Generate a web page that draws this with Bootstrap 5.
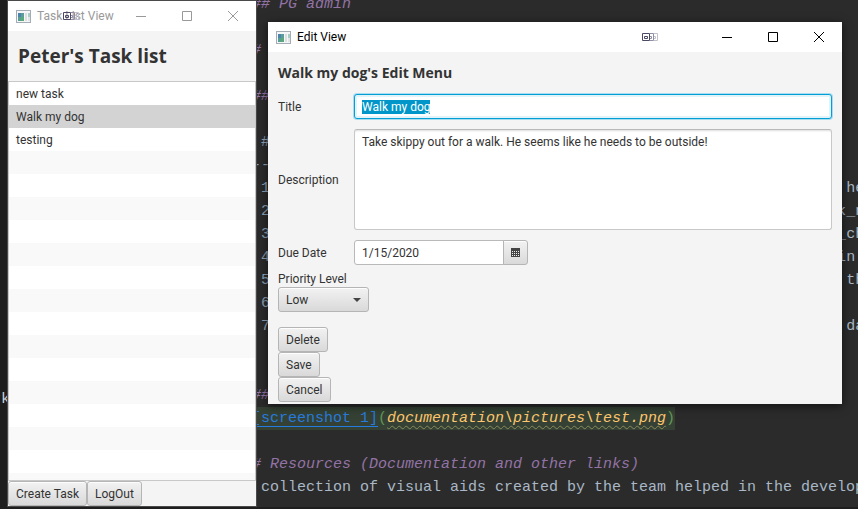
<!DOCTYPE html>
<html lang="en">
<head>
<meta charset="utf-8">
<meta name="viewport" content="width=device-width, initial-scale=1">
<title>Task List</title>
<link href="https://cdn.jsdelivr.net/npm/bootstrap@5.3.0/dist/css/bootstrap.min.css" rel="stylesheet">
<style>
  body { background: #1e1e1e; font-family: Roboto, "Open Sans", sans-serif; font-size: 12px; line-height: 16px; color: #333; }
  .desktop { height: 100vh; }
  .gutter { width: 252px; background: #1e1e1e; }
  .gutter-text { margin-top: 388px; margin-left: -8px; color: #d0d4d8; font: 15px/23px "Liberation Mono", monospace; }
  .editor { background: #2b2b2b; min-width: 0; }
  .code { margin: -7px 0 0; font: 15px/23px "Liberation Mono", monospace; color: #a9b7c6; overflow: hidden; }
  .statusbar { height: 2px; background: #1e1e1e; }
  .head { color: #9373a5; font-style: italic; }
  .num { color: #8fa3b8; }
  .line-hl { background: #344134; display: inline-block; height: 23px; color: #629755; }
  .line-hl a { color: #287bde; text-decoration: underline; text-underline-offset: 4px; }
  .line-hl em { color: #ffc66d; text-decoration: underline wavy #8a8a5a 1px; text-underline-offset: 3px; }

  .win { background: #f4f4f4; }
  .win-tasks { left: 8px; top: 1px; bottom: 3px; width: 248px; outline: 1px solid #4a4a4a; }
  .win-edit { left: 268px; right: 16px; top: 22px; box-shadow: 0 2px 9px rgba(0,0,0,.6); }
  .titlebar { height: 30px; background: #fff; color: #000; padding-left: 8px; }
  .titlebar.inactive { color: #999; }
  .titlebar .cap { width: 46px; height: 30px; color: inherit; }
  .titlebar .app-title { margin-left: 6px; }
  .overlap { left: 55px; top: 11px; }
  .grip { margin-right: 46px; }

  .tasks-title { font-family: "Open Sans", sans-serif; font-size: 19px; line-height: 26px; padding: 12px 10px; }
  .tasks { border: 1px solid #c8c8c8; background: repeating-linear-gradient(#fff 0 23px, #f9f9f9 23px 46px); }
  .task { height: 23px; padding: 0 7px; line-height: 24px; }
  .task.selected { background: #d3d3d3; }

  .fx-btn { height: 25px; padding: 0 7px; border: 1px solid #b5b5b5; border-radius: 3px; background: linear-gradient(#f2f2f2, #d9d9d9); color: #333; box-shadow: inset 0 1px #fdfdfd; font-size: 12px; line-height: 16px; }
  .edit-body { padding: 12px 10px 2px; }
  .edit-title { font-family: "Open Sans", sans-serif; font-size: 14px; line-height: 18px; margin-bottom: 12px; }
  .fields { display: grid; grid-template-columns: 66px minmax(0, 1fr); column-gap: 10px; row-gap: 10px; align-items: center; }
  .fx-field { border: 1px solid #b9b9b9; border-radius: 3px; padding: 0 7px; height: 25px; color: #333; background: #fff; outline: 0; font-size: 12px; line-height: 16px; }
  .fx-field:focus { border-color: #039ed3; box-shadow: 0 0 0 1px #a8dcef, inset 0 0 0 2px #e3f3fa; }
  .fx-field::selection { background: #0096c9; color: #fff; }
  textarea.fx-field { height: 101px; padding: 4px 7px; resize: none; display: block; border-color: #b9b9b9 #c8c8c8 #c8c8c8; box-shadow: inset 0 2px 2px -1px #ddd; }
  .date { width: 174px; }
  .date .fx-field { border-radius: 3px 0 0 3px; width: 150px; }
  .date .fx-btn { border-radius: 0 3px 3px 0; width: 25px; margin-left: -1px; padding: 0; }
  .priority-label { padding-top: 6px; }
  .priority { width: 91px; margin-bottom: 15px; }
  .priority select { appearance: none; width: 91px; text-align: left; }
  .priority svg { right: 8px; top: 11px; pointer-events: none; }
</style>
<script src="https://cdn.jsdelivr.net/npm/bootstrap@5.3.0/dist/js/bootstrap.bundle.min.js"></script>
</head>
<body class="overflow-hidden">
<svg class="d-none">
  <symbol id="app-icon" viewBox="0 0 15 13">
    <rect x=".5" y=".5" width="14" height="12" fill="#f4f6f8" stroke="#a4adb5"/>
    <rect x="2" y="3" width="6" height="8" fill="#5a9c96"/><rect x="2" y="3" width="3" height="4" fill="#4d83ad"/><rect x="5" y="7" width="3" height="4" fill="#58a878"/>
    <rect x="9" y="3" width="2" height="8" fill="#dcdfe2"/><rect x="12" y="3" width="2" height="4" fill="#a9cfc4"/><rect x="12" y="7" width="2" height="4" fill="#e0e4e6"/>
  </symbol>
  <symbol id="min" viewBox="0 0 10 10"><path d="M0 5.5h10" stroke="currentColor"/></symbol>
  <symbol id="max" viewBox="0 0 10 10"><path d="M.5.5h9v9h-9z" fill="none" stroke="currentColor"/></symbol>
  <symbol id="close" viewBox="0 0 10 10"><path d="M0 0l10 10M10 0L0 10" stroke="currentColor"/></symbol>
  <symbol id="grip" viewBox="0 0 16 8" fill="none">
    <path d="M12 .5h3.500v7H12M12 3.500h1.500v2H12" stroke="#c3c1cd"/>
    <path d="M8 .5h3.500v7H8M8 3.500h1.500v2H8" stroke="#918fa3"/>
    <path d="M.5.5h7v7h-7zM2.500 3.500h3v2h-3z" stroke="#4b4963"/>
  </symbol>
</svg>
<main class="desktop position-relative d-flex flex-column overflow-hidden">
  <div class="d-flex flex-grow-1 overflow-hidden">
    <div class="gutter flex-shrink-0"><div class="gutter-text">rk</div></div>
    <div class="editor flex-grow-1">
<pre class="code"><span class="head">## PG admin</span>

<span class="head">#</span>

<span class="head">##</span>

 <span class="num">#</span>
<span class="num">--</span>
 <span class="num">1</span>                                                                he
 <span class="num">2</span>                                                               k_n
 <span class="num">3</span>                                                               _ch
 <span class="num">4</span>                                                               in
 <span class="num">5</span>                                                                th
 <span class="num">6</span>
 <span class="num">7</span>                                                                da


<span class="head">##</span>
<span class="line-hl"><a href="#">[screenshot 1]</a>(<em>documentation\pictures\test.png</em>)</span>

<span class="head"># Resources (Documentation and other links)</span>
 collection of visual aids created by the team helped in the develop</pre>
    </div>
  </div>
  <div class="statusbar"></div>

  <section class="win win-tasks position-absolute d-flex flex-column">
    <header class="titlebar inactive d-flex align-items-center position-relative">
      <svg width="15" height="13"><use href="#app-icon"/></svg>
      <span class="app-title me-auto">Task List View</span>
      <svg class="overlap position-absolute" width="16" height="8"><use href="#grip"/></svg>
      <button class="cap btn p-0 border-0 rounded-0 d-flex align-items-center justify-content-center" aria-label="Minimize"><svg width="10" height="10"><use href="#min"/></svg></button>
      <button class="cap btn p-0 border-0 rounded-0 d-flex align-items-center justify-content-center" aria-label="Maximize"><svg width="10" height="10"><use href="#max"/></svg></button>
      <button class="cap btn p-0 border-0 rounded-0 d-flex align-items-center justify-content-center" aria-label="Close"><svg width="10" height="10"><use href="#close"/></svg></button>
    </header>
    <h1 class="tasks-title fw-bold m-0">Peter's Task list</h1>
    <ul class="tasks list-unstyled flex-grow-1 m-0">
      <li class="task">new task</li>
      <li class="task selected">Walk my dog</li>
      <li class="task">testing</li>
    </ul>
    <div class="d-flex">
      <button class="fx-btn">Create Task</button>
      <button class="fx-btn">LogOut</button>
    </div>
  </section>

  <section class="win win-edit position-absolute">
    <header class="titlebar d-flex align-items-center">
      <svg width="15" height="13"><use href="#app-icon"/></svg>
      <span class="app-title me-auto">Edit View</span>
      <svg class="grip" width="16" height="8"><use href="#grip"/></svg>
      <button class="cap btn p-0 border-0 rounded-0 d-flex align-items-center justify-content-center" aria-label="Minimize"><svg width="10" height="10"><use href="#min"/></svg></button>
      <button class="cap btn p-0 border-0 rounded-0 d-flex align-items-center justify-content-center" aria-label="Maximize"><svg width="10" height="10"><use href="#max"/></svg></button>
      <button class="cap btn p-0 border-0 rounded-0 d-flex align-items-center justify-content-center" aria-label="Close"><svg width="10" height="10"><use href="#close"/></svg></button>
    </header>
    <form class="edit-body">
      <h2 class="edit-title fw-bold">Walk my dog's Edit Menu</h2>
      <div class="fields">
        <label for="title">Title</label>
        <input id="title" class="fx-field w-100" type="text" value="Walk my dog">
        <label for="desc">Description</label>
        <textarea id="desc" class="fx-field w-100">Take skippy out for a walk. He seems like he needs to be outside!</textarea>
        <label for="due">Due Date</label>
        <div class="date d-flex">
          <input id="due" class="fx-field" type="text" value="1/15/2020">
          <button type="button" class="fx-btn d-flex align-items-center justify-content-center" aria-label="Choose date">
            <svg width="9" height="9" viewBox="0 0 9 9"><path fill="#444" d="M0 0h9v9H0z"/><path d="M1 3.500h7M1 5.500h7M1 7.500h7" stroke="#eee" stroke-dasharray="1 1"/></svg>
          </button>
        </div>
      </div>
      <label for="priority" class="priority-label d-block">Priority Level</label>
      <div class="priority position-relative">
        <select id="priority" class="fx-btn d-block"><option>Low</option></select>
        <svg class="position-absolute" width="8" height="4"><path d="M0 0h8L4 4z" fill="#444"/></svg>
      </div>
      <div class="d-flex flex-column align-items-start">
        <button type="button" class="fx-btn">Delete</button>
        <button type="button" class="fx-btn">Save</button>
        <button type="button" class="fx-btn">Cancel</button>
      </div>
    </form>
  </section>
</main>
<script>
  document.getElementById('title').select();
</script>
</body>
</html>
